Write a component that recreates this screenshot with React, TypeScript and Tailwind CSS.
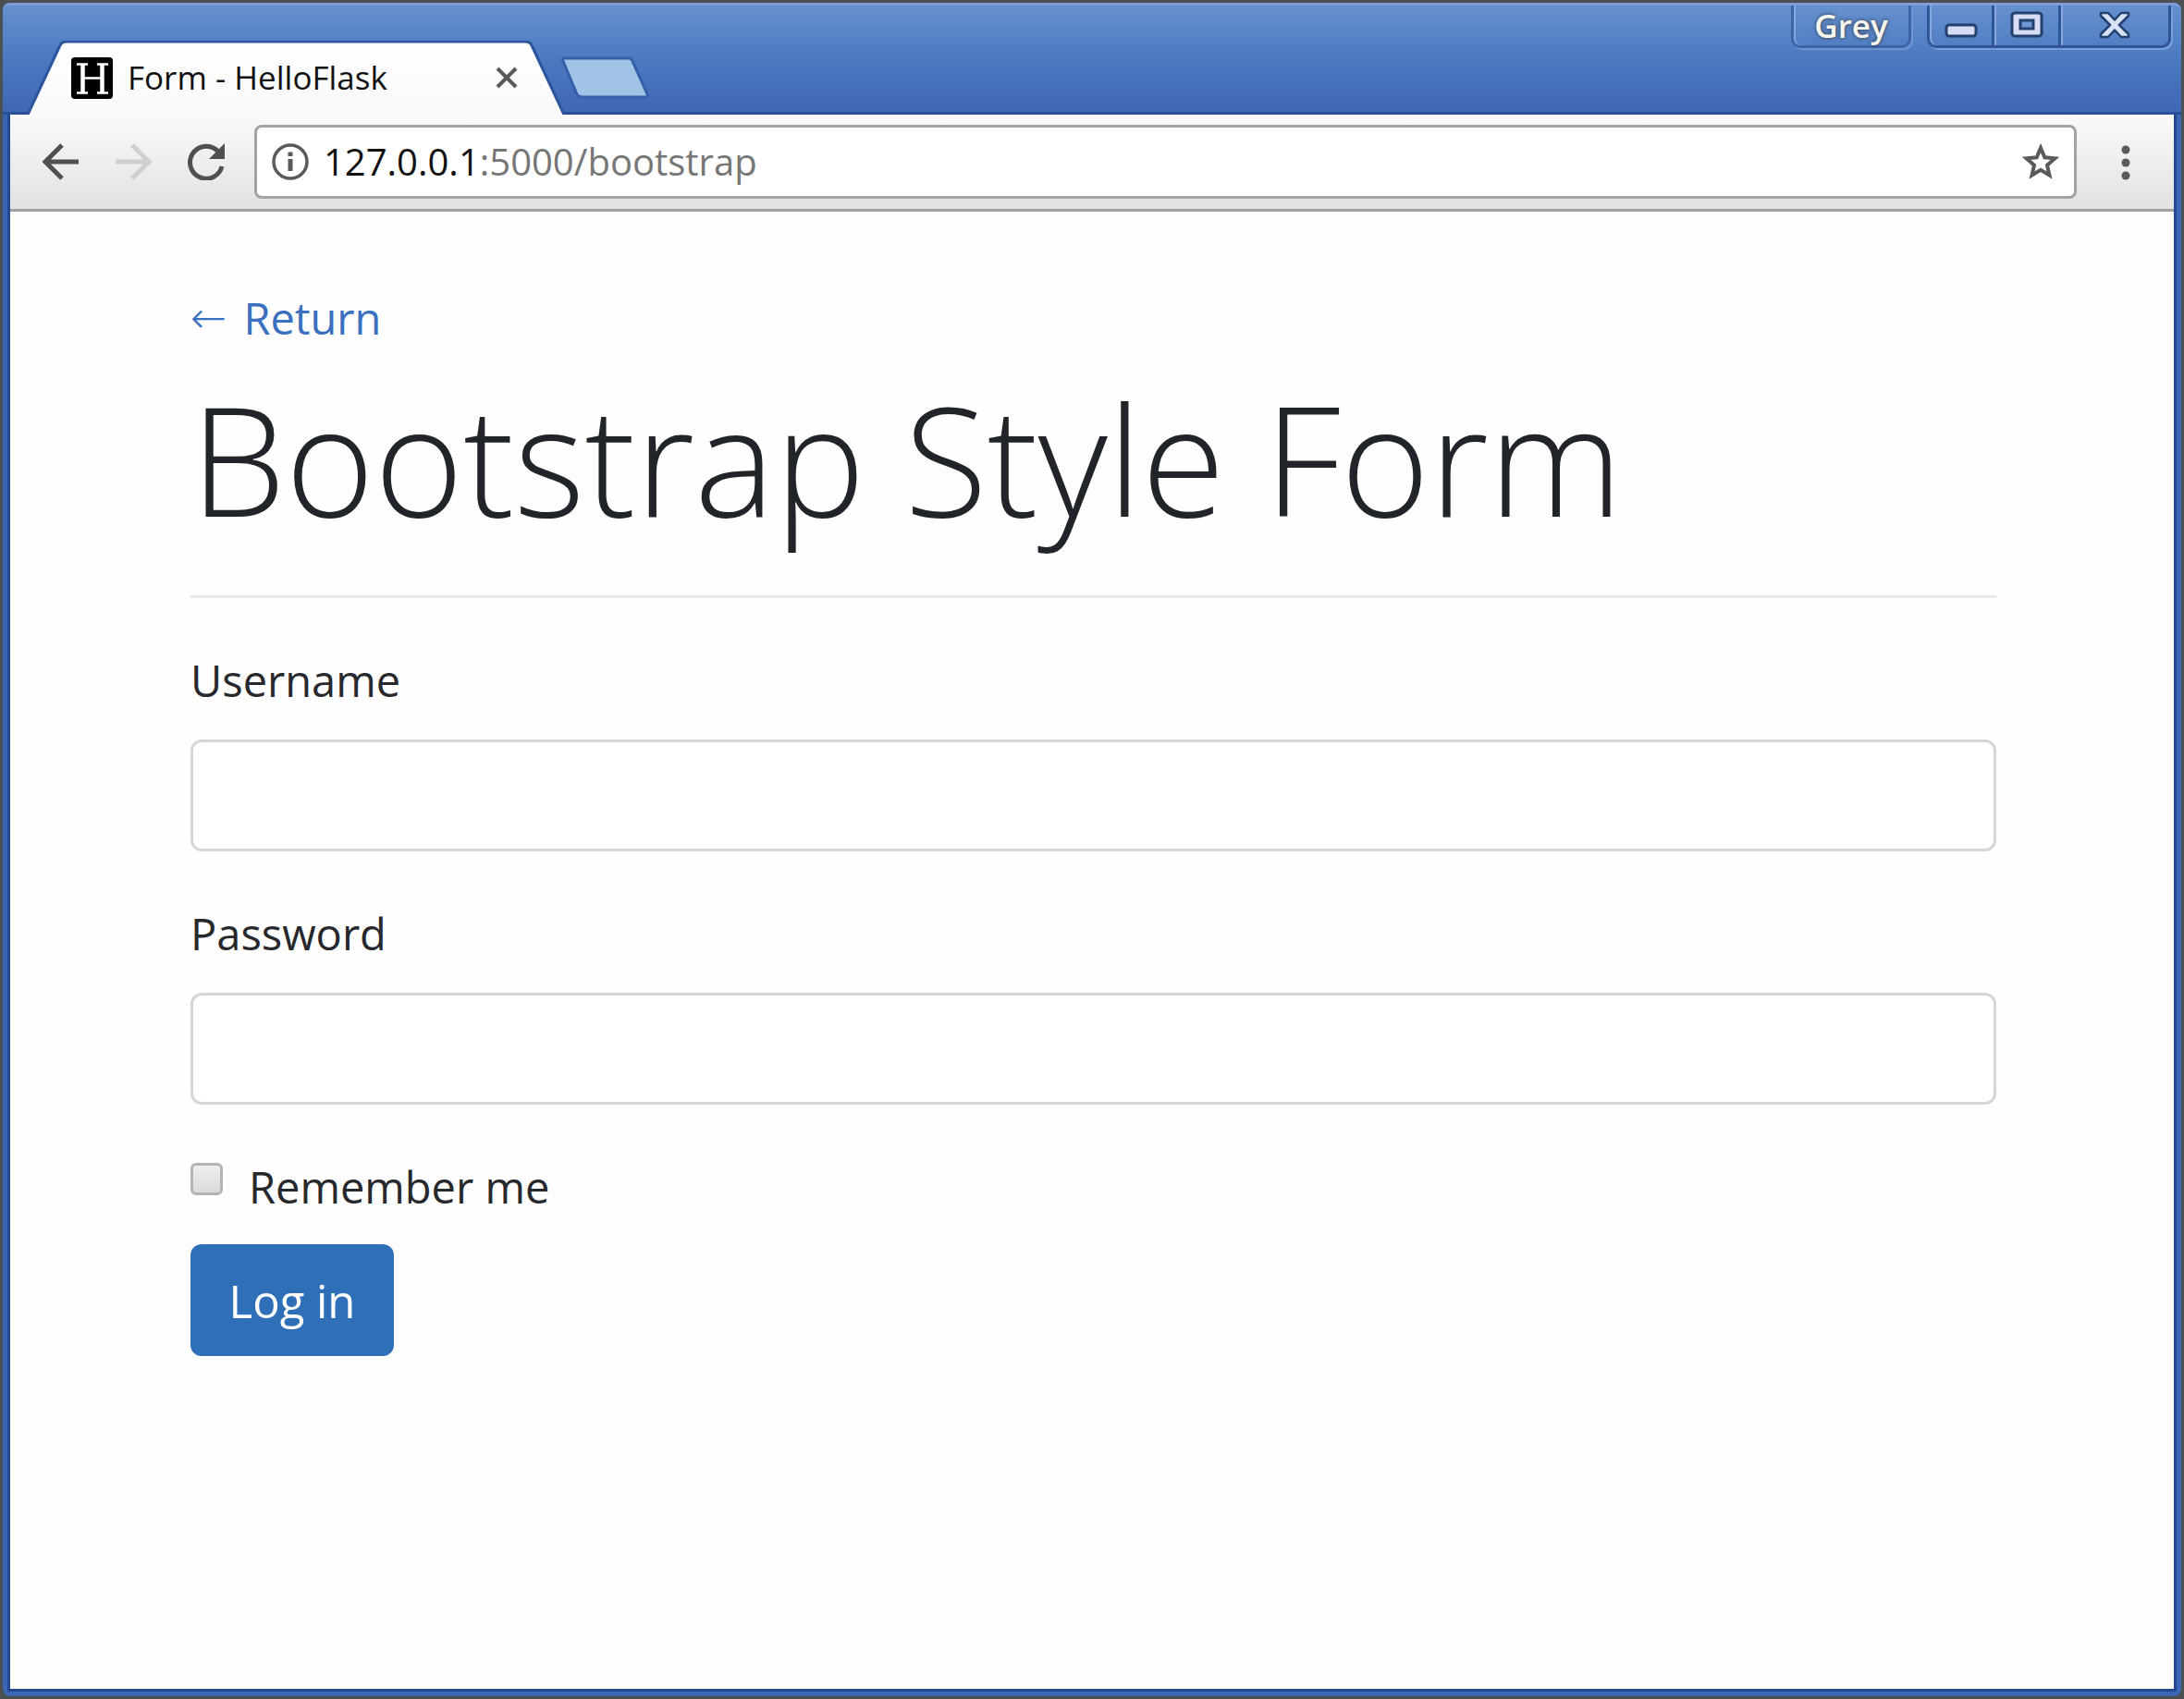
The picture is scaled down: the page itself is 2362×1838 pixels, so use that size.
import React from "react";

const toolButton = "flex size-[52px] shrink-0 items-center justify-center";

function Favicon() {
  return (
    <svg viewBox="0 0 45 45" className="size-[45px] shrink-0" aria-hidden="true">
      <rect width="45" height="45" rx="4" fill="#000" />
      <g stroke="#fff" fill="none">
        <path d="M6 7.5H18M28 7.5H40M6 38.500H18M28 38.500H40M13 22.500H33" strokeWidth="2.500" />
        <path d="M12.500 7.500V38.500M33.500 7.500V38.500" strokeWidth="4.500" />
      </g>
    </svg>
  );
}

function Tab() {
  return (
    <div className="relative flex h-20 w-[584px] items-center pr-[54px] pl-[47px]">
      <svg viewBox="0 0 584 80" preserveAspectRatio="none" className="absolute inset-0 size-full" aria-hidden="true">
        <defs>
          <linearGradient id="tabFill" x1="0" y1="0" x2="0" y2="1">
            <stop offset="0" stopColor="#ffffff" />
            <stop offset="1" stopColor="#f9f9f9" />
          </linearGradient>
        </defs>
        <path d="M0 80L35 5Q37 1 42 1H538Q543 1 545 5L580 80Z" fill="url(#tabFill)" />
        <path d="M0 80L35 5Q37 1 42 1H538Q543 1 545 5L580 80" fill="none" stroke="#2c559e" strokeWidth="3" />
      </svg>
      <div className="relative flex flex-1 items-center">
        <Favicon />
        <span className="ml-4 flex-1 text-[35px] leading-[48px] whitespace-nowrap text-[#111]">Form - HelloFlask</span>
        <button type="button" aria-label="Close tab" className="flex size-6 items-center justify-center">
          <svg viewBox="0 0 24 24" className="size-6" aria-hidden="true">
            <path d="M2 2L22 22M22 2L2 22" stroke="#5a5a5a" strokeWidth="4" />
          </svg>
        </button>
      </div>
    </div>
  );
}

function TitleBar() {
  return (
    <header className="flex h-[121px] items-start justify-between rounded-t-lg border-t-[3px] border-b-[3px] border-t-[#7e9fd6] border-b-[#28509a] bg-linear-to-b from-[#6591d0] via-[#4b79c0] to-[#3f67b3]">
      <div className="flex items-center pt-[38px] pl-[27px]">
        <Tab />
        <button type="button" aria-label="New tab" className="-ml-2 h-12 w-[98px]">
          <svg viewBox="0 0 98 48" className="h-12 w-[98px]" aria-hidden="true">
            <path d="M4 3H74Q77 3 78 6L94 42Q95 45 92 45H24Q20 45 18 42L3 6Q2 3 4 3Z" fill="#a2c3e8" stroke="#3460aa" strokeWidth="3" />
          </svg>
        </button>
      </div>
      <div className="flex pr-[11px]">
        <button
          type="button"
          className="mr-[17px] flex h-[46px] w-[130px] items-center justify-center rounded-b-[10px] border-x-[3px] border-b-[3px] border-[#3b65a9] text-[35px] leading-[48px] font-semibold text-[#f7f6ee] shadow-[inset_2px_0_0_#84a9df,2px_2px_0_#6f96d4] [text-shadow:0_0_4px_#333]"
        >
          Grey
        </button>
        <div className="flex h-[46px] rounded-b-[10px] border-x-[3px] border-b-[3px] border-[#2d5597] shadow-[inset_2px_0_0_#84a9df,2px_2px_0_#7b9fda]">
          <button type="button" aria-label="Minimize" className="flex w-[70px] items-center justify-center border-r-[3px] border-[#2d5597]">
            <svg viewBox="0 0 36 32" className="h-8 w-9" aria-hidden="true">
              <rect x="2" y="15" width="32" height="12" rx="3" fill="#d5dcf3" stroke="#23406f" strokeWidth="3" />
            </svg>
          </button>
          <button type="button" aria-label="Maximize" className="flex w-[72px] items-center justify-center border-r-[3px] border-[#2d5597] shadow-[inset_2px_0_0_#84a9df]">
            <svg viewBox="0 0 36 32" className="h-8 w-9" aria-hidden="true">
              <rect x="2" y="2" width="32" height="25" rx="3" fill="#d5dcf3" stroke="#23406f" strokeWidth="3" />
              <rect x="11" y="10" width="14" height="9" fill="#6d9ad6" stroke="#23406f" strokeWidth="3" />
            </svg>
          </button>
          <button type="button" aria-label="Close" className="flex w-[116px] items-center justify-center shadow-[inset_2px_0_0_#84a9df]">
            <svg viewBox="0 0 36 32" className="h-8 w-9" aria-hidden="true">
              <path d="M3 2H11L18 9.500L25 2H33V5L23 15L33 25V28H25L18 20.500L11 28H3V25L13 15L3 5Z" fill="#d7e2f7" stroke="#23406f" strokeWidth="2.500" strokeLinejoin="round" />
            </svg>
          </button>
        </div>
      </div>
    </header>
  );
}

function Toolbar() {
  return (
    <nav className="flex h-[105px] items-center border-b-[3px] border-[#a0a0a0] bg-linear-to-b from-[#fafafa] to-[#e2e2e2] pr-[26px] pl-7">
      <button type="button" aria-label="Back" className={toolButton}>
        <svg viewBox="0 0 40 40" className="size-10" fill="none" stroke="#505050" strokeWidth="5" aria-hidden="true">
          <path d="M40 20H4M22 2L4 20L22 38" />
        </svg>
      </button>
      <button type="button" aria-label="Forward" disabled className={toolButton + " ml-7"}>
        <svg viewBox="0 0 40 40" className="size-10" fill="none" stroke="#cfcfcf" strokeWidth="5" aria-hidden="true">
          <path d="M0 20H36M18 2L36 20L18 38" />
        </svg>
      </button>
      <button type="button" aria-label="Reload" className={toolButton + " ml-[26px]"}>
        <svg viewBox="0 0 40 40" className="size-10" aria-hidden="true">
          <path d="M37 25A17.500 17.500 0 1 1 31.500 7.500L34 10" fill="none" stroke="#505050" strokeWidth="5" />
          <path d="M40 0V17H23Z" fill="#505050" />
        </svg>
      </button>
      <div className="ml-[26px] flex h-20 flex-1 items-center rounded-lg border-[3px] border-[#a3a3a3] bg-white pr-4 pl-4">
        <svg viewBox="0 0 40 40" className="size-10 shrink-0" aria-hidden="true">
          <circle cx="20" cy="20" r="18" fill="none" stroke="#5a5a5a" strokeWidth="3.500" />
          <path d="M20 17V30M20 9.500V14" stroke="#5a5a5a" strokeWidth="5" />
        </svg>
        <div className="ml-4 flex-1 text-[40px] leading-[56px] text-[#767676]">
          <span className="text-[#111]">127.0.0.1</span>:5000/bootstrap
        </div>
        <button type="button" aria-label="Bookmark this page" className="flex size-10 items-center justify-center">
          <svg viewBox="0 0 40 40" className="size-10" aria-hidden="true">
            <path
              d="M20 5L24.300 15.300L35.500 16.300L27 23.700L29.500 34.500L20 28.800L10.500 34.500L13 23.700L4.500 16.300L15.700 15.300Z"
              fill="none"
              stroke="#5a5a5a"
              strokeWidth="4"
            />
          </svg>
        </button>
      </div>
      <button type="button" aria-label="Menu" className={toolButton + " ml-[27px]"}>
        <svg viewBox="0 0 10 40" className="h-10 w-[10px]" fill="#5a5a5a" aria-hidden="true">
          <circle cx="5" cy="7" r="4.500" />
          <circle cx="5" cy="21" r="4.500" />
          <circle cx="5" cy="35" r="4.500" />
        </svg>
      </button>
    </nav>
  );
}

function Field({ id, label, type }: { id: string; label: string; type: string }) {
  return (
    <div className="mb-[53px]">
      <label htmlFor={id} className="mb-7 block leading-[72px]">
        {label}
      </label>
      <input
        id={id}
        name={id}
        type={type}
        className="block h-[121px] w-full rounded-xl border-[3px] border-[#d6d6d6] bg-white px-9 outline-none focus:border-[#80bdff]"
      />
    </div>
  );
}

export default function App() {
  return (
    <div className="flex min-h-screen flex-col bg-[#4c5052] p-[3px] font-['Open_Sans','Noto_Sans',sans-serif]">
      <div className="flex flex-1 flex-col rounded-lg bg-[#3c67b4]">
        <TitleBar />
        <div className="mx-[5px] mb-[5px] flex flex-1 flex-col border-x-[3px] border-b-[3px] border-[#234892] bg-[#fefefe]">
          <Toolbar />
          <main className="pt-[79px] pr-[192px] pl-[195px] text-[47px] leading-[72px] text-[#26282c]">
            <a href="#" className="flex w-fit items-center text-[#3a70c0]">
              <span className="mr-[18px] font-['DejaVu_Sans',sans-serif] font-extralight">←</span>
              <span>Return</span>
            </a>
            <h1 className="mt-1 text-[164px] leading-[224px] font-light whitespace-nowrap text-[#212429]">Bootstrap Style Form</h1>
            <hr className="mt-9 mb-[53px] border-t-[3px] border-[#e8e8e8]" />
            <form onSubmit={(e) => e.preventDefault()}>
              <Field id="username" label="Username" type="text" />
              <Field id="password" label="Password" type="password" />
              <div className="flex items-start">
                <input
                  id="remember"
                  name="remember"
                  type="checkbox"
                  className="mt-[10px] size-[35px] shrink-0 appearance-none rounded-md border-[3px] border-[#b4b4b4] bg-linear-to-b from-[#eeeeee] to-[#dadada] checked:bg-[#336fc0]"
                />
                <label htmlFor="remember" className="ml-7">
                  Remember me
                </label>
              </div>
              <button type="submit" className="mt-[26px] h-[121px] min-w-[220px] rounded-xl bg-[#2f6fb8] px-10 text-[49px] font-medium text-white">
                Log in
              </button>
            </form>
          </main>
        </div>
      </div>
    </div>
  );
}
